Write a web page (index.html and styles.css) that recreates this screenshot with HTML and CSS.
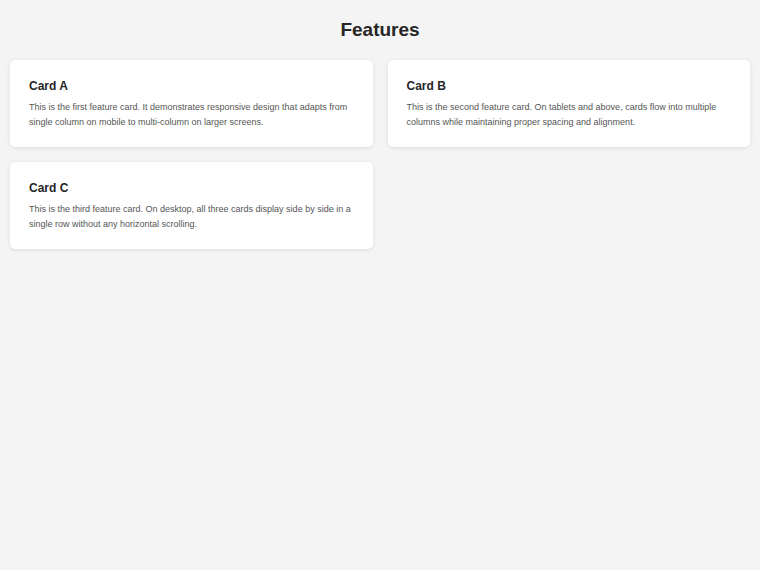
FILE: index.html
```html
<!DOCTYPE html>
<html lang="en">
<head>
<meta charset="utf-8">
<title>Features</title>
<link rel="stylesheet" href="styles.css">
</head>
<body>
<main class="page">
  <h1 class="page-title">Features</h1>
  <section class="grid">
    <article class="card">
      <h2 class="card-title">Card A</h2>
      <p class="card-text">This is the first feature card. It demonstrates responsive design that adapts from single column on mobile to multi-column on larger screens.</p>
    </article>
    <article class="card">
      <h2 class="card-title">Card B</h2>
      <p class="card-text">This is the second feature card. On tablets and above, cards flow into multiple columns while maintaining proper spacing and alignment.</p>
    </article>
    <article class="card">
      <h2 class="card-title">Card C</h2>
      <p class="card-text">This is the third feature card. On desktop, all three cards display side by side in a single row without any horizontal scrolling.</p>
    </article>
  </section>
</main>
</body>
</html>
```
FILE: styles.css
```css
* { box-sizing: border-box; }
html, body { margin: 0; padding: 0; }
body {
  background: #f4f4f4;
  font-family: "Liberation Sans", Arial, sans-serif;
  color: #222;
}
.page {
  padding: 19px 10px 10px;
}
.page-title {
  margin: 0 0 19px;
  text-align: center;
  font-size: 19px;
  line-height: 22px;
  font-weight: 700;
  color: #262626;
}
.grid {
  display: grid;
  grid-template-columns: 1fr 1fr;
  gap: 15px 15px;
}
.card {
  background: #fff;
  border-radius: 5px;
  box-shadow: 0 1px 4px rgba(0,0,0,0.1);
  padding: 18px 19px 17px;
}
.card-title {
  margin: 0 0 6px;
  font-size: 12px;
  line-height: 16px;
  font-weight: 700;
  color: #262626;
}
.card-text {
  margin: 0;
  font-size: 9px;
  line-height: 15px;
  color: #555;
}
```
